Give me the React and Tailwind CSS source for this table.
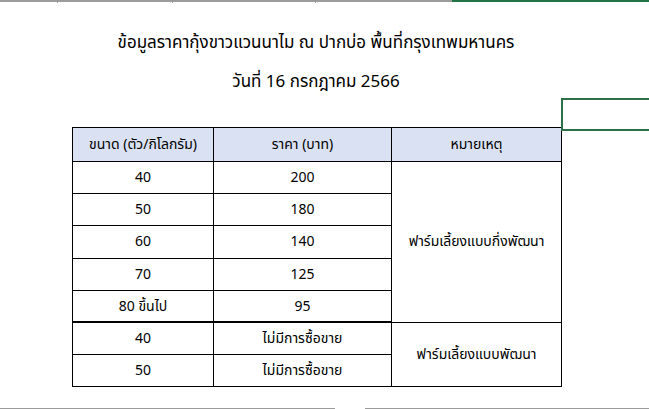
import React from "react";

const rows = [
  { size: "40", price: "200" },
  { size: "50", price: "180" },
  { size: "60", price: "140" },
  { size: "70", price: "125" },
  { size: "80 ขึ้นไป", price: "95" },
];

const rows2 = [
  { size: "40", price: "ไม่มีการซื้อขาย" },
  { size: "50", price: "ไม่มีการซื้อขาย" },
];

const font = { fontFamily: 'Tahoma, "Noto Sans Thai", "DejaVu Sans", "Noto Sans", sans-serif' };

export default function App() {
  return (
    <div className="relative w-[649px] h-[409px] bg-white overflow-hidden text-black" style={font}>
      {/* top ruler */}
      <div className="flex h-[2px]">
        <div className="w-[452px] bg-[#9b9b9b]" />
        <div className="flex-1 bg-[#217346]" />
      </div>
      <div className="flex h-[1px]">
        <div className="w-[57px]" />
        <div className="w-[1px] bg-[#9b9b9b]" />
        <div className="w-[114px]" />
        <div className="w-[1px] bg-[#9b9b9b]" />
        <div className="w-[142px]" />
        <div className="w-[1px] bg-[#9b9b9b]" />
      </div>

      {/* titles */}
      <div className="pt-[30px] flex flex-col items-center text-[17px] leading-[21px] w-[632px]">
        <div>ข้อมูลราคากุ้งขาวแวนนาไม ณ ปากบ่อ พื้นที่กรุงเทพมหานคร</div>
        <div className="mt-[18px]">วันที่ 16 กรกฎาคม 2566</div>
      </div>

      {/* selected cell */}
      <div className="absolute left-[561px] top-[98px] w-[100px] h-[33px] border-2 border-[#2e6f48]" />

      {/* table */}
      <table className="ml-[72px] mt-[34px] border-collapse table-fixed text-[14px] text-center">
        <colgroup>
          <col className="w-[141px]" />
          <col className="w-[178px]" />
          <col className="w-[170px]" />
        </colgroup>
        <thead>
          <tr className="h-[34px] bg-[#dae1f2]">
            <th className="border-[1.5px] border-black font-normal">ขนาด (ตัว/กิโลกรัม)</th>
            <th className="border-[1.5px] border-black font-normal">ราคา (บาท)</th>
            <th className="border-[1.5px] border-black font-normal">หมายเหตุ</th>
          </tr>
        </thead>
        <tbody>
          {rows.map((r, i) => (
            <tr key={i} className="h-[32.2px]">
              <td className="border-[1.5px] border-black">{r.size}</td>
              <td className="border-[1.5px] border-black">{r.price}</td>
              {i === 0 && (
                <td rowSpan={5} className="border-[1.5px] border-black">
                  ฟาร์มเลี้ยงแบบกึ่งพัฒนา
                </td>
              )}
            </tr>
          ))}
          {rows2.map((r, i) => (
            <tr key={i} className="h-[32.2px]">
              <td className={`border-[1.5px] border-black ${i === 0 ? "border-t-[2.5px]" : ""}`}>{r.size}</td>
              <td className={`border-[1.5px] border-black ${i === 0 ? "border-t-[2.5px]" : ""}`}>{r.price}</td>
              {i === 0 && (
                <td rowSpan={2} className="border-[1.5px] border-black">
                  ฟาร์มเลี้ยงแบบพัฒนา
                </td>
              )}
            </tr>
          ))}
        </tbody>
      </table>

      {/* bottom ruler */}
      <div className="absolute left-0 right-0 top-[408px] flex h-[1px]">
        <div className="w-[335px] bg-[#9b9b9b]" />
        <div className="w-[30px]" />
        <div className="flex-1 bg-[#9b9b9b]" />
      </div>
    </div>
  );
}
